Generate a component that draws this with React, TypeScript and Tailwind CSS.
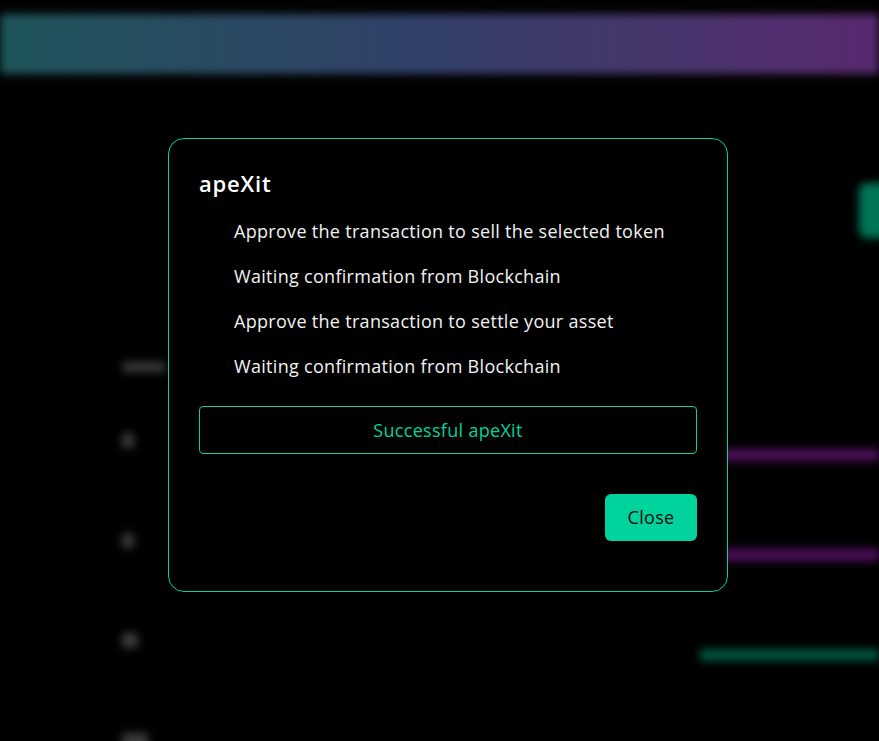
import React from 'react';

const steps = [
    'Approve the transaction to sell the selected token',
    'Waiting confirmation from Blockchain',
    'Approve the transaction to settle your asset',
    'Waiting confirmation from Blockchain',
];

// rows of the (blurred) table behind the modal
const rows = [
    { bar: 'bg-[#4d0f5a]', start: 'ml-[540px]', w: 'w-[12px]' },
    { bar: 'bg-[#4d0f5a]', start: 'ml-[540px]', w: 'w-[12px]' },
    { bar: 'bg-[#00543e]', start: 'ml-[562px]', w: 'w-[16px]' },
    { bar: 'bg-[#00543e]', start: 'ml-[540px]', w: 'w-[26px]' },
];

const Backdrop: React.FC = () => (
    <div className="blur-[4px] select-none">
        <div className="pt-[14px]">
            <div className="h-[60px] w-full bg-gradient-to-r from-[#1d555a] via-[#323f6a] to-[#58296f]" />
        </div>
        <div className="flex justify-end mt-[109px]">
            <div className="w-[40px] h-[55px] rounded-lg bg-[#007557] -mr-[20px]" />
        </div>
        <div className="pl-[122px] mt-[124px]">
            <div className="h-[10px] w-[44px] rounded bg-[#3a3a3a]" />
            <div className="mt-[18px]">
                {rows.map((row, i) => (
                    <div key={i} className="flex items-center h-[100px]">
                        <div className={`h-[15px] ${row.w} rounded bg-[#3c3c3c]`} />
                        <div className={`h-[12px] mt-[30px] flex-1 ${row.start} ${row.bar}`} />
                    </div>
                ))}
            </div>
        </div>
    </div>
);

export default function App() {
    return (
        <div
            className="relative h-[741px] w-full overflow-hidden bg-black"
            style={{ fontFamily: '"Open Sans", "Liberation Sans", sans-serif' }}
        >
            <Backdrop />

            {/* Modal */}
            <div className="absolute left-[168px] top-[138px] w-[560px] h-[454px] rounded-2xl border border-[#00d49c] bg-black px-[30px] pt-[30px]">
                <h2 className="text-[22px] leading-[28px] font-semibold tracking-[0.8px] text-white">apeXit</h2>
                <ul className="mt-3">
                    {steps.map((step, i) => (
                        <li key={i} className="flex items-center h-[45px] pl-[35px] text-[18px] font-medium tracking-[0.3px] text-[#f2f2f2]">
                            {step}
                        </li>
                    ))}
                </ul>
                <div className="mt-[17px] h-[48px] flex items-center justify-center rounded border border-[#00d49c] text-[18px] tracking-[0.3px] text-[#00d49c]">
                    Successful apeXit
                </div>
                <div className="flex justify-end mt-[40px]">
                    <button className="w-[92px] h-[47px] rounded-md bg-[#00d49c] text-[18px] tracking-[0.3px] text-[#0b0b0b]">
                        Close
                    </button>
                </div>
            </div>
        </div>
    );
}
